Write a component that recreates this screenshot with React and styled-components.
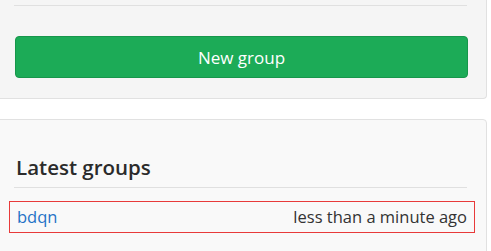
import React from "react";
import styled, { createGlobalStyle } from "styled-components";

const Global = createGlobalStyle`
  html, body { margin: 0; padding: 0; background: #ffffff; }
  body { font-family: "Open Sans", "Noto Sans", sans-serif; color: #333333; overflow: hidden; }
`;

const Page = styled.div`
  display: flex;
  flex-direction: column;
  gap: 20px;
  width: 489px;
  margin-left: -2px;
`;

const Panel = styled.section`
  background: ${(p) => p.$bg};
  border: 1px solid #e1e1e1;
  border-top: ${(p) => (p.$cut ? "none" : "1px solid #e1e1e1")};
  border-radius: ${(p) => (p.$cut ? "0 0 4px 0" : "0 4px 0 0")};
  padding: ${(p) => p.$pad};
`;

const Rule = styled.hr`
  border: none;
  border-top: 1px solid #e0e0e0;
  margin: ${(p) => p.$mt || "0"} 0 0 15px;
  width: 453px;
`;

const Button = styled.button`
  display: block;
  margin: 30px 0 0 16px;
  width: 453px;
  height: 42px;
  background: #1cab57;
  border: 1px solid #17964b;
  border-radius: 4px;
  color: #ffffff;
  font-family: "Open Sans", "Noto Sans", sans-serif;
  font-size: 17px;
  padding-bottom: 1px;
  cursor: pointer;
`;

const Heading = styled.h3`
  margin: 0 0 0 17px;
  font-size: 20.5px;
  font-weight: 600;
  color: #2b2b2b;
  line-height: 30px;
`;

const Row = styled.div`
  display: flex;
  justify-content: space-between;
  align-items: center;
  margin: 13px 0 0 10px;
  width: 466px;
  height: 32px;
  box-sizing: border-box;
  border: 1px solid #e83a3a;
  padding: 0 7px 1px 7px;
  font-size: 16.5px;
`;

const Link = styled.a`
  color: #1f72c6;
  text-decoration: none;
`;

const Time = styled.span`
  color: #333333;
`;

export default function App() {
  return (
    <>
      <Global />
      <Page>
        <Panel $bg="#f5f5f5" $cut $pad="5px 0 20px 0">
          <Rule />
          <Button>New group</Button>
        </Panel>
        <Panel $bg="#f9f9f9" $pad="32px 0 40px 0">
          <Heading>Latest groups</Heading>
          <Rule $mt="5px" />
          <Row>
            <Link href="#">bdqn</Link>
            <Time>less than a minute ago</Time>
          </Row>
        </Panel>
      </Page>
    </>
  );
}
